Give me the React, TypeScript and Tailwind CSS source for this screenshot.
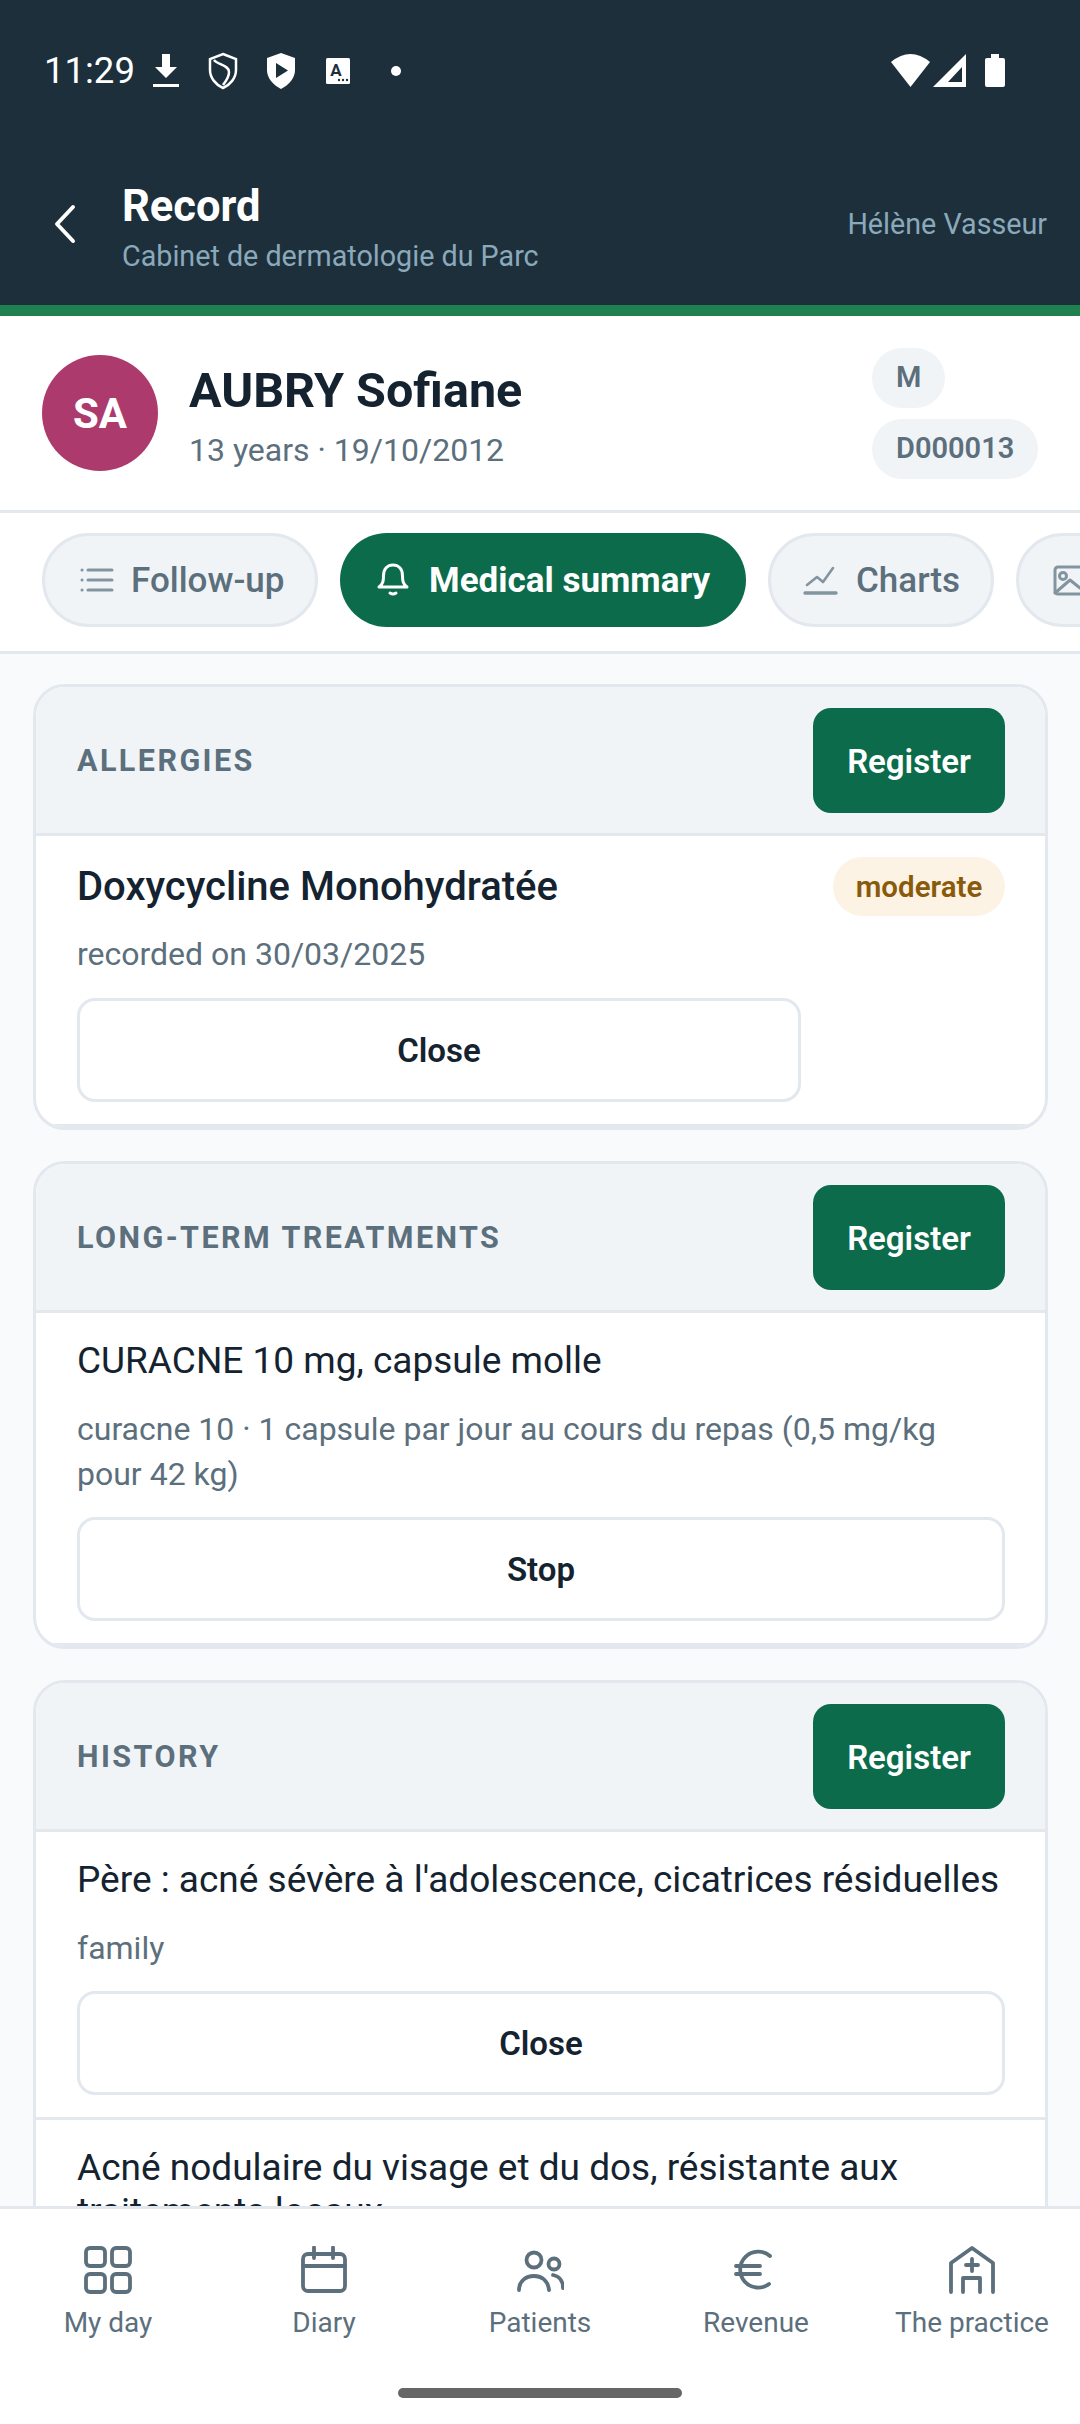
import type { ReactNode } from "react";

// status bar icons
function StatusLeftIcons() {
  return (
    <div className="flex items-center">
      <svg width="30" height="38" viewBox="0 0 30 38" className="ml-[16px]">
        <path d="M11 2h8v13h7L15 26 4 15h7z" fill="#fff" />
        <rect x="2" y="32" width="26" height="3" fill="#fff" />
      </svg>
      <svg width="32" height="38" viewBox="0 0 32 38" className="ml-[26px]">
        <path d="M16 2 L29 7 V18 C29 26 23 33 16 36 C9 33 3 26 3 18 V7 Z" fill="none" stroke="#fff" strokeWidth="2.5" />
        <path d="M7 8 C11 13 22 13 22 20 C22 26 18 30 16 33" fill="none" stroke="#fff" strokeWidth="2.5" />
      </svg>
      <svg width="32" height="38" viewBox="0 0 32 38" className="ml-[26px]">
        <path d="M16 1 L30 6 V18 C30 26 24 33 16 37 C8 33 2 26 2 18 V6 Z" fill="#fff" />
        <path d="M11 11 L23 18.5 L11 26 Z" fill="#1E2F3C" />
      </svg>
      <svg width="26" height="28" viewBox="0 0 26 28" className="ml-[28px]">
        <rect x="1" y="1" width="24" height="26" rx="1.5" fill="#fff" />
        <text x="11" y="19" fontSize="17" fontWeight="700" textAnchor="middle" fill="#1E2F3C" fontFamily="Roboto, sans-serif">A</text>
        <circle cx="14" cy="23" r="1.2" fill="#1E2F3C" />
        <circle cx="18" cy="23" r="1.2" fill="#1E2F3C" />
        <circle cx="22" cy="23" r="1.2" fill="#1E2F3C" />
      </svg>
      <div className="ml-[40px] h-[10px] w-[10px] rounded-full bg-white" />
    </div>
  );
}

function StatusRightIcons() {
  return (
    <svg width="116" height="36" viewBox="0 0 116 36">
      <path d="M1 9 Q20.5 -7 40 9 L20.5 34 Z" fill="#fff" />
      <path d="M43 34 L76 1 V34 Z M58 29 H72 V14 Z" fill="#fff" fillRule="evenodd" />
      <path d="M101 1 H109 V5 H113 Q115 5 115 7 V32 Q115 34 113 34 H97 Q95 34 95 32 V7 Q95 5 97 5 H101 Z" fill="#fff" />
    </svg>
  );
}

function NavIcon({ name }: { name: string }) {
  const common = {
    width: 48,
    height: 48,
    viewBox: "0 0 48 48",
    fill: "none",
    stroke: "#5C6F7C",
    strokeWidth: 3.8,
    strokeLinecap: "round" as const,
    strokeLinejoin: "round" as const,
  };
  if (name === "day") {
    return (
      <svg {...common}>
        <rect x="2" y="2" width="19" height="18" rx="4" />
        <rect x="28" y="2" width="18" height="18" rx="4" />
        <rect x="2" y="28" width="19" height="18" rx="4" />
        <rect x="28" y="28" width="18" height="18" rx="4" />
      </svg>
    );
  }
  if (name === "diary") {
    return (
      <svg {...common}>
        <rect x="3" y="8" width="42" height="37" rx="5" />
        <path d="M3 20H45M14 1.5V12M33 1.5V12" />
      </svg>
    );
  }
  if (name === "patients") {
    return (
      <svg {...common}>
        <circle cx="18" cy="14" r="7.5" />
        <circle cx="38" cy="18" r="5.5" />
        <path d="M3 44C3 35 10 30 18 30C26 30 32 35 33 44" />
        <path d="M37 29C43 30 47 35 47 42" />
      </svg>
    );
  }
  if (name === "revenue") {
    return (
      <svg {...common}>
        <path d="M38 10A18 18 0 1 0 37 38" />
        <path d="M4 20H28M4 28H28" />
      </svg>
    );
  }
  return (
    <svg {...common}>
      <path d="M3 46V17L24 2L45 17V46" />
      <path d="M24 13V25M18 19H30" />
      <path d="M15 46V32H32V46" />
    </svg>
  );
}

function Tab({ active, icon, label, className }: { active?: boolean; icon: ReactNode; label?: string; className: string }) {
  return (
    <div
      className={`flex h-[94px] flex-none items-center rounded-full ${className} ${
        active ? "bg-[#0B6B4A] font-bold text-white" : "border-[3px] border-[#E2E8EE] bg-[#F1F4F7] font-medium text-[#5C6F7C]"
      }`}
    >
      {icon}
      {label && <span className="text-[35px] leading-none">{label}</span>}
    </div>
  );
}

function SectionHead({ title }: { title: string }) {
  return (
    <div className="flex items-center justify-between border-b-[3px] border-[#E2E8EE] bg-[#F1F4F7] pt-[21px] pr-[40px] pb-[20px] pl-[41px]">
      <span className="pt-[1px] text-[30.5px] font-bold tracking-[0.08em] text-[#5C6F7C]">{title}</span>
      <button className="h-[105px] w-[192px] rounded-[18px] bg-[#0B6B4A] pt-[2px] text-[33px] font-semibold text-white">Register</button>
    </div>
  );
}

function OutlineButton({ label, className = "" }: { label: string; className?: string }) {
  return (
    <button className={`h-[104px] rounded-[18px] border-[3px] border-[#E2E8EE] bg-white pt-[2px] text-[33px] font-semibold text-[#14232F] ${className}`}>
      {label}
    </button>
  );
}

function Card({ title, children }: { title: string; children: ReactNode }) {
  return (
    <section className="flex-none overflow-hidden rounded-[32px] border-[3px] border-[#E2E8EE] bg-white">
      <SectionHead title={title} />
      {children}
    </section>
  );
}

const NAV_ITEMS = [
  { icon: "day", label: "My day" },
  { icon: "diary", label: "Diary" },
  { icon: "patients", label: "Patients" },
  { icon: "revenue", label: "Revenue" },
  { icon: "practice", label: "The practice" },
];

export default function App() {
  return (
    <div className="flex h-[2424px] w-[1080px] flex-col overflow-hidden bg-[#F8FAFC] font-[Roboto,sans-serif]">
      {/* Header */}
      <header className="flex-none border-b-[11px] border-[#1F8050] bg-[#1E2F3C]">
        <div className="flex h-[142px] items-center justify-between pr-[74px] pl-[44px]">
          <div className="flex items-center">
            <span className="text-[36.5px] leading-none text-white">11:29</span>
            <StatusLeftIcons />
          </div>
          <StatusRightIcons />
        </div>
        <div className="flex h-[163px] items-center justify-between pr-[33px] pl-[50px]">
          <div className="flex items-center">
            <svg width="30" height="44" viewBox="0 0 30 44" fill="none" stroke="#fff" strokeWidth="4" strokeLinecap="round" strokeLinejoin="round">
              <path d="M23 5L7 22L23 39" />
            </svg>
            <div className="ml-[42px] pt-[9px]">
              <div className="text-[43.5px] leading-[50px] font-bold text-white">Record</div>
              <div className="mt-[6px] text-[28.7px] leading-[36px] text-[#8AA9BA]">Cabinet de dermatologie du Parc</div>
            </div>
          </div>
          <span className="pt-[2px] text-[28.7px] text-[#8AA9BA]">Hélène Vasseur</span>
        </div>
      </header>

      {/* Patient */}
      <div className="flex h-[197px] flex-none items-center justify-between border-b-[3px] border-[#E2E8EE] bg-white pr-[44px] pl-[42px]">
        <div className="flex items-center">
          <div className="flex h-[116px] w-[116px] items-center justify-center rounded-full bg-[#AD3A6D] text-[42px] font-bold text-white">SA</div>
          <div className="ml-[31px] pt-[4px]">
            <div className="text-[48.5px] leading-[60px] font-bold text-[#14232F]">AUBRY Sofiane</div>
            <div className="mt-[9px] text-[32px] leading-[40px] text-[#5C6F7C]">13 years · 19/10/2012</div>
          </div>
        </div>
        <div className="flex w-[164px] flex-col items-start gap-[11px] text-[29px] font-semibold text-[#5C6F7C]">
          <div className="flex h-[60px] items-center rounded-full bg-[#F1F4F7] px-[24px]">M</div>
          <div className="flex h-[60px] items-center rounded-full bg-[#F1F4F7] px-[24px]">D000013</div>
        </div>
      </div>

      {/* Tabs */}
      <div className="flex h-[141px] flex-none gap-[22px] overflow-hidden border-b-[3px] border-[#E2E8EE] bg-white pt-[20px] pl-[42px]">
        <Tab
          label="Follow-up"
          className="w-[276px] pl-[33px]"
          icon={
            <svg width="36" height="38" viewBox="0 0 36 38" fill="none" stroke="#82949F" strokeWidth="3" strokeLinecap="round" className="mr-[17px]">
              <path d="M4 9H4.1M4 19H4.1M4 29H4.1M10 9H34M10 19H34M10 29H34" />
            </svg>
          }
        />
        <Tab
          active
          label="Medical summary"
          className="w-[406px] pl-[35px]"
          icon={
            <svg width="36" height="36" viewBox="0 0 36 36" fill="none" stroke="#fff" strokeWidth="3" strokeLinecap="round" strokeLinejoin="round" className="mr-[18px]">
              <path d="M4 25C8 22 8.5 19 8.5 14C8.5 7 12.5 3 18 3C23.5 3 27.5 7 27.5 14C27.5 19 28 22 32 25Z" />
              <path d="M15 31Q18 33 21 31" />
            </svg>
          }
        />
        <Tab
          label="Charts"
          className="w-[226px] pl-[31px]"
          icon={
            <svg width="36" height="36" viewBox="0 0 36 36" fill="none" stroke="#82949F" strokeWidth="2.6" strokeLinecap="round" strokeLinejoin="round" className="mr-[18px]">
              <path d="M5 23L15 15L21 20L31 6" />
              <path d="M3 31H34" strokeWidth="3.4" />
            </svg>
          }
        />
        <Tab
          className="w-[226px] pl-[33px]"
          icon={
            <svg width="44" height="36" viewBox="0 0 44 36" fill="none" stroke="#82949F" strokeWidth="3" strokeLinecap="round" strokeLinejoin="round">
              <rect x="3" y="5" width="38" height="27" rx="3" />
              <circle cx="11" cy="14" r="3.5" />
              <path d="M3 31L18 18L28 26" />
            </svg>
          }
        />
      </div>

      {/* Sections */}
      <main className="flex min-h-0 flex-1 flex-col gap-[31px] overflow-hidden pt-[30px] pr-[32px] pl-[33px]">
        <Card title="ALLERGIES">
          <div className="flex gap-[32px] border-b-[3px] border-[#E2E8EE] pt-[21px] pr-[40px] pb-[22px] pl-[41px]">
            <div className="flex flex-1 flex-col">
              <div className="text-[40px] leading-[60px] font-medium text-[#14232F]">Doxycycline Monohydratée</div>
              <div className="mt-[15px] text-[32px] leading-[45px] text-[#5C6F7C]">recorded on 30/03/2025</div>
              <OutlineButton label="Close" className="mt-[21px]" />
            </div>
            <div className="flex h-[59px] w-[172px] flex-none items-center justify-center rounded-full bg-[#FCF3E5] pt-[2px] text-[29.5px] font-semibold text-[#8A5A0B]">moderate</div>
          </div>
        </Card>

        <Card title="LONG-TERM TREATMENTS">
          <div className="flex flex-col border-b-[3px] border-[#E2E8EE] pt-[21px] pr-[40px] pb-[22px] pl-[41px]">
            <div className="text-[37px] leading-[54px] text-[#14232F]">CURACNE 10 mg, capsule molle</div>
            <div className="mt-[19px] text-[32px] leading-[45px] text-[#5C6F7C]">curacne 10 · 1 capsule par jour au cours du repas (0,5 mg/kg pour 42 kg)</div>
            <OutlineButton label="Stop" className="mt-[20px]" />
          </div>
        </Card>

        <Card title="HISTORY">
          <div className="flex flex-col border-b-[3px] border-[#E2E8EE] pt-[21px] pr-[40px] pb-[22px] pl-[41px]">
            <div className="text-[37px] leading-[54px] text-[#14232F]">Père : acné sévère à l'adolescence, cicatrices résiduelles</div>
            <div className="mt-[19px] text-[32px] leading-[45px] text-[#5C6F7C]">family</div>
            <OutlineButton label="Close" className="mt-[20px]" />
          </div>
          <div className="pt-[26px] pr-[40px] pb-[30px] pl-[41px]">
            <div className="text-[37px] leading-[44px] text-[#14232F]">Acné nodulaire du visage et du dos, résistante aux traitements locaux</div>
          </div>
        </Card>
      </main>

      {/* Bottom nav */}
      <nav className="relative h-[218px] flex-none border-t-[3px] border-[#E2E8EE] bg-white">
        <div className="grid grid-cols-5 pt-[37px]">
          {NAV_ITEMS.map((item) => (
            <div key={item.label} className="flex flex-col items-center">
              <NavIcon name={item.icon} />
              <span className="mt-[11px] text-[28px] leading-[36px] text-[#5C6F7C]">{item.label}</span>
            </div>
          ))}
        </div>
        <div className="absolute bottom-[26px] left-[398px] h-[10px] w-[284px] rounded-full bg-[#666666]" />
      </nav>
    </div>
  );
}
